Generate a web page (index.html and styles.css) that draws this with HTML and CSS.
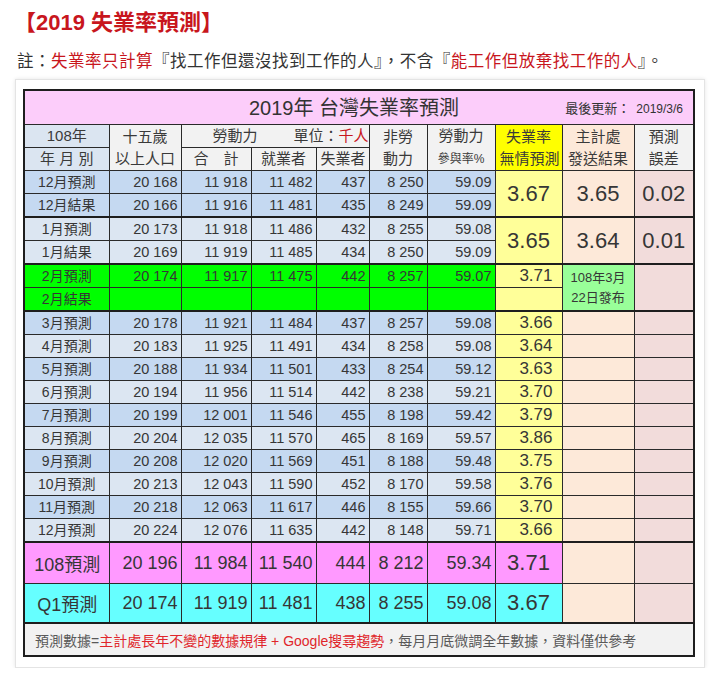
FILE: index.html
```html
<!DOCTYPE html>
<html lang="zh-Hant">
<head>
<meta charset="utf-8">
<title>2019 失業率預測</title>
<link rel="stylesheet" href="styles.css">
</head>
<body>
<h1 class="page-title">【2019 失業率預測】</h1>
<p class="note">註：<span class="red">失業率只計算</span>『找工作但還沒找到工作的人』，不含『<span class="red">能工作但放棄找工作的人</span>』。</p>
<div class="card">
<table class="grid">
<colgroup>
<col class="w85"><col class="w72"><col class="w70"><col class="w65"><col class="w53"><col class="w58"><col class="w68"><col class="w67"><col class="w72"><col class="w60">
</colgroup>
<tr class="r-title">
<td colspan="10"><div class="title-in"><span class="t-main">2019年 台灣失業率預測</span><span class="t-upd">最後更新：<span class="t-date">2019/3/6</span></span></div></td>
</tr>
<tr class="hd hd1">
<td class="hb">108年</td>
<td rowspan="2">十五歲<br>以上人口</td>
<td colspan="3" class="labor">勞動力<span class="unit">單位：<span class="red">千人</span></span></td>
<td rowspan="2">非勞<br>動力</td>
<td rowspan="2">勞動力<br><span class="sm">參與率%</span></td>
<td rowspan="2" class="hy">失業率<br>無情預測</td>
<td rowspan="2" class="pe">主計處<br>發送結果</td>
<td rowspan="2">預測<br>誤差</td>
</tr>
<tr class="hd hd2">
<td class="hb">年 月 別</td>
<td>合　計</td>
<td>就業者</td>
<td>失業者</td>
</tr>

<tr class="d db"><td class="lb">12月預測</td><td>20 168</td><td>11 918</td><td>11 482</td><td>437</td><td>8 250</td><td>59.09</td><td rowspan="2" class="ye big">3.67</td><td rowspan="2" class="pe big">3.65</td><td rowspan="2" class="pk big">0.02</td></tr>
<tr class="d db"><td class="lb">12月結果</td><td>20 166</td><td>11 916</td><td>11 481</td><td>435</td><td>8 249</td><td>59.09</td></tr>

<tr class="d dl sep"><td class="lb">1月預測</td><td>20 173</td><td>11 918</td><td>11 486</td><td>432</td><td>8 255</td><td>59.08</td><td rowspan="2" class="ye big">3.65</td><td rowspan="2" class="pe big">3.64</td><td rowspan="2" class="pk big">0.01</td></tr>
<tr class="d dl"><td class="lb">1月結果</td><td>20 169</td><td>11 919</td><td>11 485</td><td>434</td><td>8 250</td><td>59.09</td></tr>

<tr class="d dg sep"><td class="lb">2月預測</td><td>20 174</td><td>11 917</td><td>11 475</td><td>442</td><td>8 257</td><td>59.07</td><td class="ye rate">3.71</td><td rowspan="2" class="lg pub">108年3月<br>22日發布</td><td rowspan="2" class="pk"></td></tr>
<tr class="d dg"><td class="lb">2月結果</td><td></td><td></td><td></td><td></td><td></td><td></td><td class="ye"></td></tr>

<tr class="d db sep"><td class="lb">3月預測</td><td>20 178</td><td>11 921</td><td>11 484</td><td>437</td><td>8 257</td><td>59.08</td><td class="ye rate">3.66</td><td class="pe"></td><td class="pk"></td></tr>
<tr class="d dl"><td class="lb">4月預測</td><td>20 183</td><td>11 925</td><td>11 491</td><td>434</td><td>8 258</td><td>59.08</td><td class="ye rate">3.64</td><td class="pe"></td><td class="pk"></td></tr>
<tr class="d db"><td class="lb">5月預測</td><td>20 188</td><td>11 934</td><td>11 501</td><td>433</td><td>8 254</td><td>59.12</td><td class="ye rate">3.63</td><td class="pe"></td><td class="pk"></td></tr>
<tr class="d dl"><td class="lb">6月預測</td><td>20 194</td><td>11 956</td><td>11 514</td><td>442</td><td>8 238</td><td>59.21</td><td class="ye rate">3.70</td><td class="pe"></td><td class="pk"></td></tr>
<tr class="d db"><td class="lb">7月預測</td><td>20 199</td><td>12 001</td><td>11 546</td><td>455</td><td>8 198</td><td>59.42</td><td class="ye rate">3.79</td><td class="pe"></td><td class="pk"></td></tr>
<tr class="d dl"><td class="lb">8月預測</td><td>20 204</td><td>12 035</td><td>11 570</td><td>465</td><td>8 169</td><td>59.57</td><td class="ye rate">3.86</td><td class="pe"></td><td class="pk"></td></tr>
<tr class="d db"><td class="lb">9月預測</td><td>20 208</td><td>12 020</td><td>11 569</td><td>451</td><td>8 188</td><td>59.48</td><td class="ye rate">3.75</td><td class="pe"></td><td class="pk"></td></tr>
<tr class="d dl"><td class="lb">10月預測</td><td>20 213</td><td>12 043</td><td>11 590</td><td>452</td><td>8 170</td><td>59.58</td><td class="ye rate">3.76</td><td class="pe"></td><td class="pk"></td></tr>
<tr class="d db"><td class="lb">11月預測</td><td>20 218</td><td>12 063</td><td>11 617</td><td>446</td><td>8 155</td><td>59.66</td><td class="ye rate">3.70</td><td class="pe"></td><td class="pk"></td></tr>
<tr class="d dl"><td class="lb">12月預測</td><td>20 224</td><td>12 076</td><td>11 635</td><td>442</td><td>8 148</td><td>59.71</td><td class="ye rate">3.66</td><td class="pe"></td><td class="pk"></td></tr>

<tr class="sum sm-mag sep"><td class="lb">108預測</td><td>20 196</td><td>11 984</td><td>11 540</td><td>444</td><td>8 212</td><td>59.34</td><td class="big">3.71</td><td class="pe"></td><td class="pk"></td></tr>
<tr class="sum sm-cyan"><td class="lb">Q1預測</td><td>20 174</td><td>11 919</td><td>11 481</td><td>438</td><td>8 255</td><td>59.08</td><td class="big">3.67</td><td class="pe"></td><td class="pk"></td></tr>

<tr class="foot sep"><td colspan="10">預測數據=<span class="fred">主計處長年不變的數據規律 + Google搜尋趨勢</span>，每月月底微調全年數據，資料僅供參考</td></tr>
</table>
</div>
</body>
</html>
```

FILE: styles.css
```css
html, body {
  margin: 0;
  padding: 0;
  background: #ffffff;
}

body {
  font-family: "Liberation Sans", "Noto Sans CJK TC", sans-serif;
  color: #333333;
  padding: 9px 15px 0 15px;
}

.page-title {
  margin: 0 0 0 -1px;
  font-size: 22px;
  line-height: 28px;
  font-weight: bold;
  color: #c8161d;
  font-family: "Liberation Sans", "Noto Sans CJK TC", sans-serif;
}

.note {
  margin: 13px 0 0 2px;
  font-size: 16.5px;
  line-height: 22px;
  letter-spacing: 0.5px;
  color: #333333;
}

.red {
  color: #c8161d;
}

.card {
  margin-top: 7px;
  width: 690px;
  box-sizing: border-box;
  border: 1px solid #e4e4e4;
  box-shadow: 0 0 4px rgba(0, 0, 0, 0.10);
  padding: 9px 7px 10px 7px;
  background: #ffffff;
}

.grid {
  border-collapse: collapse;
  table-layout: fixed;
  width: 670px;
  border: 2px solid #1e1e1e;
  font-family: "Liberation Sans", "Noto Sans CJK TC", sans-serif;
  color: #363636;
}

.w85 { width: 85px; }
.w72 { width: 72px; }
.w70 { width: 70px; }
.w65 { width: 65px; }
.w53 { width: 53px; }
.w58 { width: 58px; }
.w68 { width: 68px; }
.w67 { width: 67px; }
.w60 { width: 60px; }

.grid td {
  border: 1px solid #2a2a2a;
  padding: 0 4px;
  white-space: nowrap;
  overflow: hidden;
}

/* title row */
.r-title td {
  height: 33px;
  background: #fccdfa;
  padding: 0;
}

.title-in {
  display: flex;
  align-items: center;
}

.t-main {
  margin-left: 224px;
  font-size: 20px;
  line-height: 24px;
  color: #333333;
}

.t-upd {
  margin-left: auto;
  margin-right: 10px;
  font-size: 13px;
  color: #333333;
}

.t-date {
  margin-left: 6px;
  font-size: 12px;
}

/* header rows */
.hd td {
  background: #f2f2f2;
  text-align: center;
  font-size: 15px;
  line-height: 22px;
  color: #3a3a3a;
}

.hd1 td { height: 22px; }
.hd2 td { height: 21px; }

.hd td.hb {
  background: #dbe5f1;
}

.hd td.hy {
  background: #ffff00;
}

.hd td.pe {
  background: #fde9d9;
}

.hd .labor {
  text-align: left;
  padding-left: 31px;
}

.hd .unit {
  margin-left: 36px;
}

.hd .sm {
  font-size: 12px;
}

/* data rows */
.d td {
  height: 22px;
  font-size: 14.5px;
  line-height: 20px;
  text-align: right;
  padding-right: 3px;
}

.d td.lb {
  text-align: center;
  font-size: 14px;
  padding-right: 4px;
}

.db td { background: #c5d9f1; }
.dl td { background: #dce6f2; }
.dg td { background: #00ff00; }

.sep > td {
  border-top: 2px solid #1e1e1e;
}

.grid td.ye { background: #ffff99; }
.grid td.pe { background: #fde9d9; }
.grid td.pk { background: #f2dcdb; }
.grid td.lg { background: #99ff99; }

.grid td.rate {
  font-size: 17px;
  padding-right: 9px;
}

.grid td.big {
  text-align: center;
  font-size: 22px;
  padding: 0;
}

.grid td.pub {
  text-align: center;
  font-size: 13px;
  line-height: 20px;
  padding: 0;
}

/* summary rows */
.sum td {
  font-size: 18px;
  text-align: right;
  padding-right: 3px;
}

.sum td.lb {
  text-align: center;
  font-size: 18px;
}

.sm-mag td { height: 40px; background: #ff99ff; }
.sm-cyan td { height: 38px; background: #66ffff; }

.grid .sum td.big {
  font-size: 22px;
  text-align: center;
  padding: 0;
}

/* footnote */
.foot td {
  height: 31px;
  background: #f2f2f2;
  font-size: 14px;
  color: #595959;
  padding-left: 10px;
}

.fred {
  color: #e0262b;
}
```
